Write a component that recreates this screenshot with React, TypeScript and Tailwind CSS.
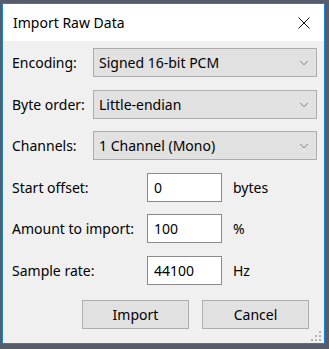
import { ChevronDown } from "lucide-react";

const font = "font-['Noto_Sans',_'Open_Sans',_sans-serif]";

function SelectRow({ label, value, mt }: { label: string; value: string; mt: string }) {
  return (
    <div className={`flex items-center h-[29px] ${mt}`}>
      <span className="w-[81px] shrink-0 text-[14px] text-black">{label}</span>
      <div className="flex items-center justify-between w-[224px] h-full bg-[#e1e1e1] border border-[#adadad] pl-[5px] pr-[5px]">
        <span className="text-[14px] text-black">{value}</span>
        <ChevronDown size={14} strokeWidth={1.5} className="text-[#707070]" />
      </div>
    </div>
  );
}

function InputRow({ label, value, unit, mt }: { label: string; value: string; unit: string; mt: string }) {
  return (
    <div className={`flex items-center h-[29px] ${mt}`}>
      <span className="w-[135px] shrink-0 text-[14px] text-black">{label}</span>
      <input
        type="text"
        defaultValue={value}
        className="w-[75px] h-full bg-white border border-[#8a8a8a] px-[6px] text-[14px] text-black outline-none"
      />
      <span className="ml-[11px] text-[14px] text-black">{unit}</span>
    </div>
  );
}

export default function App() {
  return (
    <div className={`w-[329px] h-[349px] bg-[#555c6e] pt-[3px] pl-[2px] ${font}`}>
      <div className="relative w-[323px] h-[341px] border border-[#1883d7] flex flex-col">
        <div className="h-[37px] bg-white flex items-center justify-between pl-[10px] pr-[14px]">
          <span className="text-[14px] text-black">Import Raw Data</span>
          <svg width="12" height="12" viewBox="0 0 12 12">
            <path d="M0.5 0.5 L11.5 11.5 M11.5 0.5 L0.5 11.5" stroke="#111" strokeWidth="1" />
          </svg>
        </div>
        <div className="flex-1 bg-[#f0f0f0] pl-[9px] pr-[6px]">
          <SelectRow label="Encoding:" value="Signed 16-bit PCM" mt="mt-[7px]" />
          <SelectRow label="Byte order:" value="Little-endian" mt="mt-[13px]" />
          <SelectRow label="Channels:" value="1 Channel (Mono)" mt="mt-[12px]" />
          <InputRow label="Start offset:" value="0" unit="bytes" mt="mt-[13px]" />
          <InputRow label="Amount to import:" value="100" unit="%" mt="mt-[12px]" />
          <InputRow label="Sample rate:" value="44100" unit="Hz" mt="mt-[13px]" />
          <div className="flex gap-[13px] mt-[15px] pl-[70px]">
            <button className="w-[107px] h-[29px] bg-[#e1e1e1] border border-[#adadad] text-[14px] text-black">
              Import
            </button>
            <button className="w-[107px] h-[29px] bg-[#e1e1e1] border border-[#adadad] text-[14px] text-black">
              Cancel
            </button>
          </div>
        </div>
        <svg className="absolute right-[3px] bottom-[2px]" width="10" height="10" viewBox="0 0 10 10">
          <g fill="#b4b4b4">
            <rect x="8" y="0" width="2" height="2" />
            <rect x="4" y="4" width="2" height="2" />
            <rect x="8" y="4" width="2" height="2" />
            <rect x="0" y="8" width="2" height="2" />
            <rect x="4" y="8" width="2" height="2" />
            <rect x="8" y="8" width="2" height="2" />
          </g>
        </svg>
      </div>
    </div>
  );
}
